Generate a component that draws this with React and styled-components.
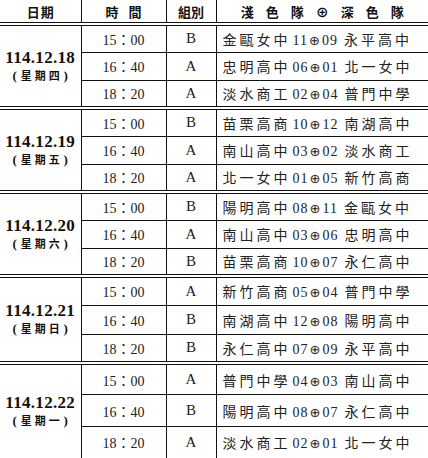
import React from 'react'
import styled, { createGlobalStyle } from 'styled-components'

const GlobalStyle = createGlobalStyle`
  html, body {
    margin: 0;
    padding: 0;
    background: #fff;
  }
  body {
    font-family: "Liberation Serif", "Noto Sans CJK TC", serif;
    color: #111;
  }
`

const schedule = [
  {
    date: '114.12.18',
    day: '星期四',
    rowHeight: 28,
    games: [
      ['15：00', 'B', '金甌女中', '11', '09', '永平高中'],
      ['16：40', 'A', '忠明高中', '06', '01', '北一女中'],
      ['18：20', 'A', '淡水商工', '02', '04', '普門中學'],
    ],
  },
  {
    date: '114.12.19',
    day: '星期五',
    rowHeight: 28,
    games: [
      ['15：00', 'B', '苗栗高商', '10', '12', '南湖高中'],
      ['16：40', 'A', '南山高中', '03', '02', '淡水商工'],
      ['18：20', 'A', '北一女中', '01', '05', '新竹高商'],
    ],
  },
  {
    date: '114.12.20',
    day: '星期六',
    rowHeight: 28,
    games: [
      ['15：00', 'B', '陽明高中', '08', '11', '金甌女中'],
      ['16：40', 'A', '南山高中', '03', '06', '忠明高中'],
      ['18：20', 'B', '苗栗高商', '10', '07', '永仁高中'],
    ],
  },
  {
    date: '114.12.21',
    day: '星期日',
    rowHeight: 29,
    games: [
      ['15：00', 'A', '新竹高商', '05', '04', '普門中學'],
      ['16：40', 'B', '南湖高中', '12', '08', '陽明高中'],
      ['18：20', 'B', '永仁高中', '07', '09', '永平高中'],
    ],
  },
  {
    date: '114.12.22',
    day: '星期一',
    rowHeight: 31.7,
    games: [
      ['15：00', 'A', '普門中學', '04', '03', '南山高中'],
      ['16：40', 'B', '陽明高中', '08', '07', '永仁高中'],
      ['18：20', 'A', '淡水商工', '02', '01', '北一女中'],
    ],
  },
]

const App = () => (
  <>
    <GlobalStyle />
    <Table>
      <colgroup>
        <col style={{ width: 81 }} />
        <col style={{ width: 85 }} />
        <col style={{ width: 50 }} />
        <col />
      </colgroup>
      <thead>
        <tr>
          <HeadCell>
            <Spaced $gap={1}>日期</Spaced>
          </HeadCell>
          <HeadCell>
            <Spaced $gap={10}>時間</Spaced>
          </HeadCell>
          <HeadCell>
            <Spaced $gap={0}>組別</Spaced>
          </HeadCell>
          <HeadCell>
            <Spaced $gap={12}>淺色隊⊕深色隊</Spaced>
          </HeadCell>
        </tr>
      </thead>
      <tbody>
        {schedule.map((day) =>
          day.games.map((g, i) => (
            <Row key={day.date + i} $first={i === 0} $h={day.rowHeight}>
              {i === 0 && (
                <DateCell rowSpan={3}>
                  <DateText>{day.date}</DateText>
                  <DayText>
                    <Paren>(</Paren>
                    {day.day}
                    <Paren>)</Paren>
                  </DayText>
                </DateCell>
              )}
              <TimeCell>{g[0]}</TimeCell>
              <GroupCell>{g[1]}</GroupCell>
              <MatchCell>
                <Team>{g[2]}</Team>
                <Score>
                  {g[3]}
                  <Versus>⊕</Versus>
                  {g[4]}
                </Score>
                <Team>{g[5]}</Team>
              </MatchCell>
            </Row>
          ))
        )}
      </tbody>
    </Table>
  </>
)

const Table = styled.table`
  width: 428px;
  border-collapse: collapse;
  table-layout: fixed;

  td,
  th {
    padding: 0;
    border: 1px solid #111;
  }

  tr > *:first-child {
    border-left: none;
  }

  tr > *:last-child {
    border-right: none;
  }
`

const HeadCell = styled.th`
  height: 22px;
  font-family: "Noto Sans CJK TC", sans-serif;
  font-weight: 700;
  font-size: 13px;
  text-align: center;
  vertical-align: middle;
  border-top: none !important;
  border-bottom: 4px double #111 !important;
`

const Spaced = styled.span`
  letter-spacing: ${({ $gap }) => $gap}px;
  margin-right: ${({ $gap }) => -$gap}px;
`

const Row = styled.tr`
  height: ${({ $h }) => $h}px;

  & > td {
    border-top: ${({ $first }) => ($first ? '4px double #111' : '1px solid #111')};
  }
`

const DateCell = styled.td`
  text-align: center;
  vertical-align: middle;
`

const DateText = styled.div`
  font-family: "Liberation Serif", serif;
  font-weight: 700;
  font-size: 17px;
  line-height: 18px;
  letter-spacing: 0.3px;
`

const DayText = styled.div`
  font-family: "Noto Sans CJK TC", sans-serif;
  font-weight: 700;
  font-size: 11px;
  line-height: 17px;
  letter-spacing: 3px;
  margin-right: -3px;
`

const Paren = styled.span`
  display: inline-block;
  width: 9px;
  font-family: "Liberation Serif", serif;
  font-size: 13px;
  text-align: center;
`

const TimeCell = styled.td`
  text-align: center;
  vertical-align: middle;
  font-size: 14px;
  color: #222;
`

const GroupCell = styled.td`
  text-align: center;
  vertical-align: middle;
  font-size: 15px;
  color: #222;
`

const MatchCell = styled.td`
  padding-left: 6px !important;
  vertical-align: middle;
  white-space: nowrap;
  font-size: 14px;
  color: #222;
`

const Team = styled.span`
  font-family: "Noto Sans CJK TC", sans-serif;
  font-weight: 400;
  letter-spacing: 3px;
`

const Score = styled.span`
  margin: 0 6px 0 2px;
  letter-spacing: 1px;
`

const Versus = styled.span`
  font-family: "DejaVu Sans", sans-serif;
  font-size: 13px;
  margin: 0 1px;
`

export default App
